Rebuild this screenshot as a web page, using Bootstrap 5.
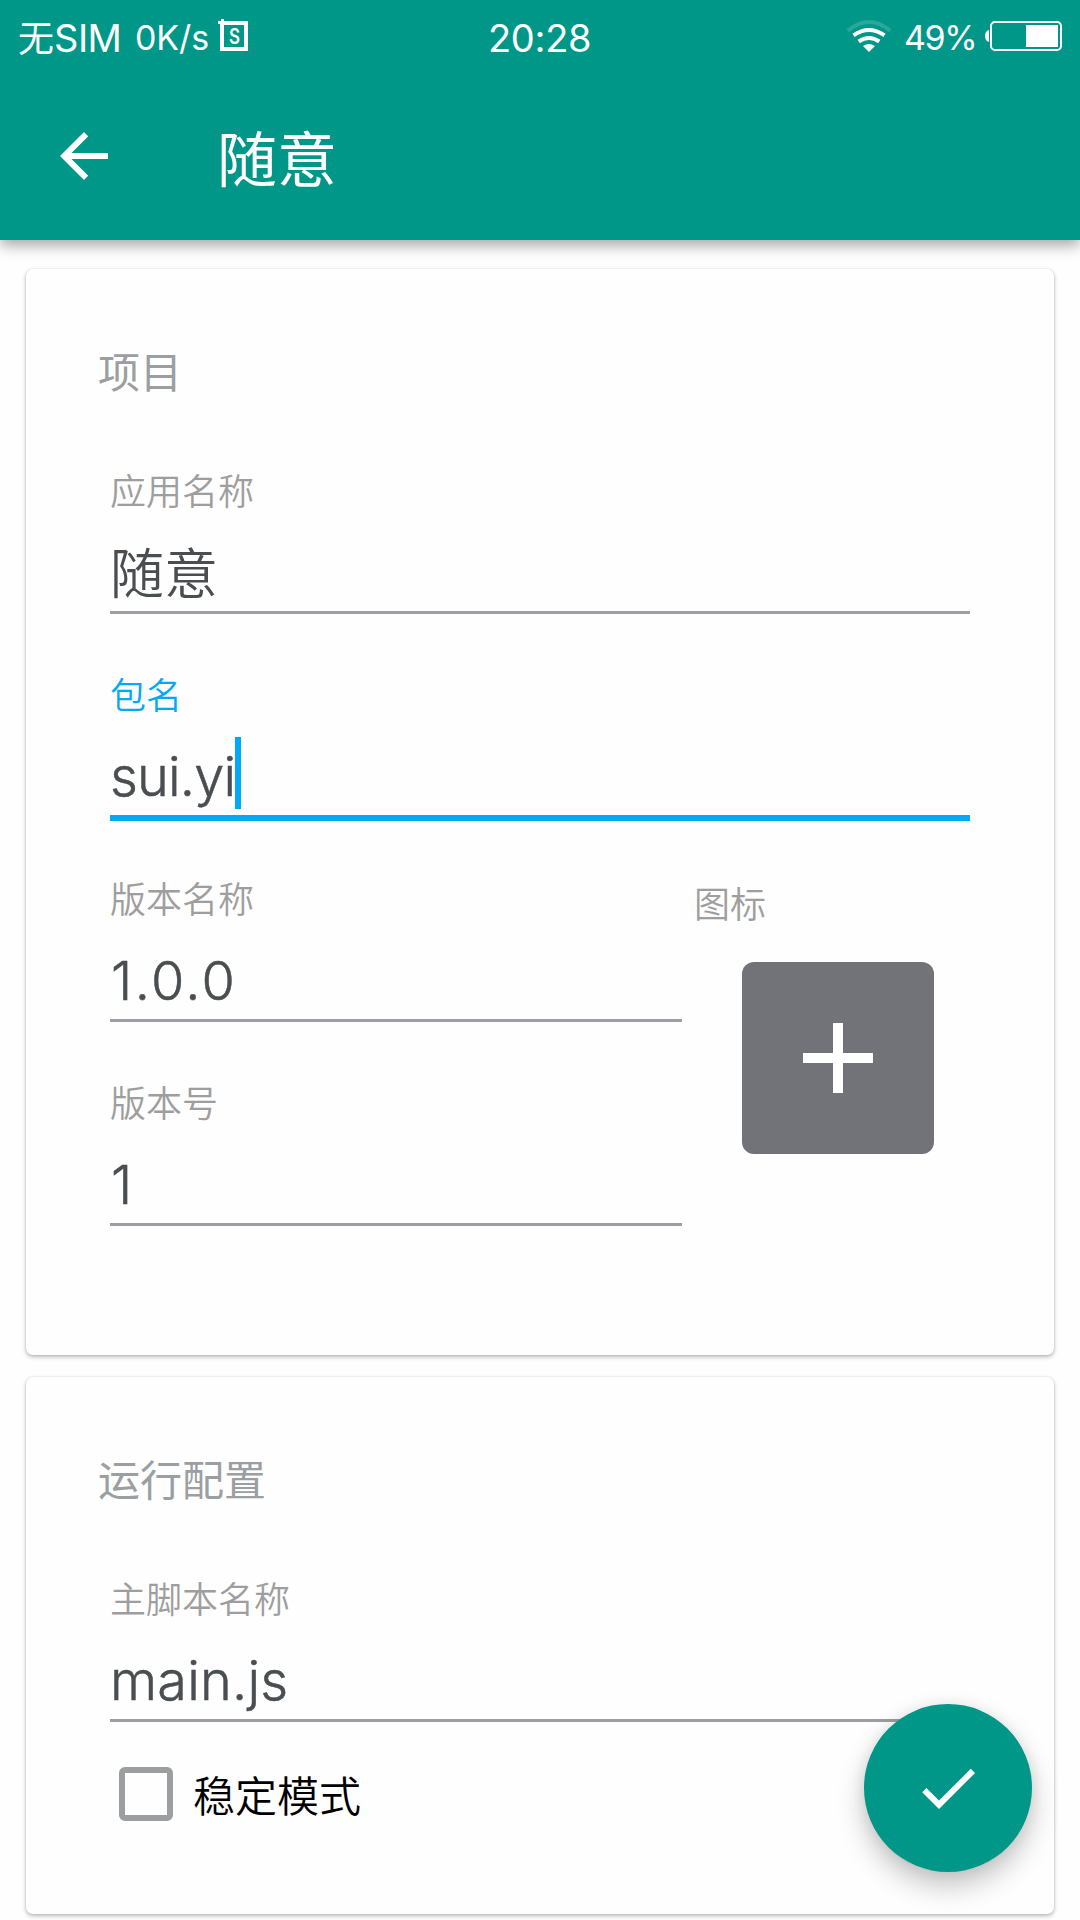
<!DOCTYPE html>
<html lang="zh-CN">
<head>
<meta charset="utf-8">
<meta name="viewport" content="width=device-width, initial-scale=1">
<title>随意</title>
<link href="https://cdn.jsdelivr.net/npm/bootstrap@5.3.0/dist/css/bootstrap.min.css" rel="stylesheet">
<style>
  body { width: 1080px; height: 1920px; overflow: hidden; background: #fefefe; color: #4a4e51;
         font-family: Inter, "Noto Sans CJK SC", sans-serif; font-weight: 350; }
  .top-area { height: 240px; background: #009788; box-shadow: 0 5px 14px rgba(0,0,0,.36); position: relative; }
  .status-row { height: 72px; padding: 0 17px 0 18px; font-weight: 400; line-height: 72px; }
  .status-row svg { display: block; flex: none; }
  .carrier { font-size: 38px; width: 117px; letter-spacing: -.5px; padding-top: 4px; }
  .carrier span { font-size: 36px; letter-spacing: 0; }
  .speed { font-size: 34px; width: 83px; letter-spacing: -.1px; padding-top: 3px; }
  .clock { font-size: 38px; letter-spacing: -.3px; padding-top: 3px; }
  .percent { font-size: 34px; width: 81px; letter-spacing: -1.4px; padding-top: 3px; }
  .status-side { width: 470px; }
  .s-badge { width: 32px; height: 34px; }
  .app-row { height: 168px; padding-left: 48px; }
  .app-title { font-size: 60px; line-height: 84px; font-weight: 400; margin-left: 97px; padding-top: 7px; }
  .page-body { padding: 29px 26px 0; }
  .panel { border: 0; border-radius: 7px; background: #fefefe; padding: 0 84px;
           box-shadow: 0 2px 4px rgba(0,0,0,.27), 0 0 2px rgba(0,0,0,.12); }
  .panel-project { height: 1086px; margin-bottom: 22px; }
  .panel-run { height: 537px; }
  .section-title { height: 144px; padding: 74px 0 0; margin: 0 0 0 -12px; font-size: 42px; line-height: 60px;
                   font-weight: 400; color: #9b9fa2; }
  .field { height: 204px; padding-top: 52px; }
  .field-label { font-size: 36px; line-height: 54px; height: 54px; color: #9e9e9e; }
  .field-value { height: 92px; margin-top: 14px; font-size: 54px; line-height: 80px; display: flex; align-items: flex-start; }
  .field-value.cjk { line-height: 83px; }
  .field-line { height: 3px; background: #9c9ea1; margin-top: -14px; }
  .field.active .field-label { color: #03a9f5; }
  .field.active .field-line { height: 6px; background: #03a9f5; }
  .latin, .digits, .script-name { -webkit-text-stroke: .5px #4a4e51; }
  .latin { letter-spacing: -.8px; }
  .digits { letter-spacing: 2.4px; padding-left: 1px; }
  .script-name { letter-spacing: .2px; }
  .caret { width: 6px; height: 72px; background: #03a9f5; }
  .col-version { width: 572px; }
  .col-icon { padding: 57px 0 0 12px; }
  .icon-pick { width: 192px; height: 192px; border-radius: 12px; background: #727378; margin: 30px 0 0 48px; }
  .check-row { height: 54px; margin-top: 42px; padding-left: 9px; font-size: 42px; color: #000; gap: 20px; }
  .check-text { padding-top: 4px; }
  .check-box { width: 54px; height: 54px; border: 6px solid #9b9fa2; border-radius: 6px; }
  .fab { position: absolute; left: 864px; top: 1704px; width: 168px; height: 168px; background: #009788;
         box-shadow: 0 14px 28px rgba(0,0,0,.23), 0 0 14px rgba(0,0,0,.07); }
</style>
<script src="https://cdn.jsdelivr.net/npm/bootstrap@5.3.0/dist/js/bootstrap.bundle.min.js"></script>
</head>
<body class="position-relative">
<header class="top-area text-white">
  <div class="status-row d-flex align-items-center">
    <div class="status-side d-flex align-items-center text-nowrap">
      <div class="carrier"><span>无</span>SIM</div>
      <div class="speed">0K/s</div>
      <svg class="s-badge" viewBox="0 0 32 34"><path d="M0 2H3V0H6V2H30V32H2V5H0ZM6 6V28H26V6Z" fill="#fff" fill-rule="evenodd"/><text x="11" y="25" font-size="21" font-weight="600" font-family="Inter" fill="#fff" textLength="11" lengthAdjust="spacingAndGlyphs">S</text></svg>
    </div>
    <div class="clock">20:28</div>
    <div class="d-flex align-items-center ms-auto text-nowrap">
      <svg width="46" height="34" viewBox="847 19 46 34" class="me-2">
        <path d="M848.8 30.8Q870 13.200 891.2 30.8" fill="none" stroke="#fff" stroke-opacity=".16" stroke-width="4"/>
        <path d="M854.500 35.300Q870 24.700 885.500 35.300M859.700 41.500Q870 34.500 880.300 41.500" fill="none" stroke="#fff" stroke-width="4"/>
        <path d="M864 46Q870 42 876 46L870 52Z" fill="#fff"/>
      </svg>
      <div class="percent ms-1">49%</div>
      <svg width="78" height="34" viewBox="985 19 78 34">
        <path d="M989 30v12q-4-1-4-6t4-6z" fill="#fff"/>
        <rect x="991" y="22" width="70" height="28" rx="4" fill="none" stroke="#fff" stroke-width="2"/>
        <rect x="1026" y="25" width="32" height="22" fill="#fff"/>
      </svg>
    </div>
  </div>
  <div class="app-row d-flex align-items-center">
    <svg width="72" height="72" viewBox="0 0 24 24" fill="#fff"><path d="M20 11H7.830l5.590-5.590L12 4l-8 8 8 8 1.410-1.410L7.830 13H20v-2z"/></svg>
    <h1 class="app-title mb-0">随意</h1>
  </div>
</header>

<main class="page-body">
  <section class="card panel panel-project">
    <h2 class="section-title">项目</h2>
    <div class="field">
      <div class="field-label">应用名称</div>
      <div class="field-value cjk">随意</div>
      <div class="field-line"></div>
    </div>
    <div class="field active">
      <div class="field-label">包名</div>
      <div class="field-value"><span class="latin">sui.yi</span><i class="caret"></i></div>
      <div class="field-line"></div>
    </div>
    <div class="d-flex">
      <div class="col-version">
        <div class="field">
          <div class="field-label">版本名称</div>
          <div class="field-value digits">1.0.0</div>
          <div class="field-line"></div>
        </div>
        <div class="field">
          <div class="field-label">版本号</div>
          <div class="field-value digits">1</div>
          <div class="field-line"></div>
        </div>
      </div>
      <div class="col-icon">
        <div class="field-label">图标</div>
        <div class="icon-pick d-flex align-items-center justify-content-center">
          <svg width="70" height="70" viewBox="0 0 70 70" fill="#fff"><path d="M30 0h10v30h30v10H40v30H30V40H0V30h30z"/></svg>
        </div>
      </div>
    </div>
  </section>

  <section class="card panel panel-run">
    <h2 class="section-title">运行配置</h2>
    <div class="field">
      <div class="field-label">主脚本名称</div>
      <div class="field-value script-name">main.js</div>
      <div class="field-line"></div>
    </div>
    <div class="check-row d-flex align-items-center" role="checkbox" aria-checked="false">
      <div class="check-box"></div>
      <div class="check-text">稳定模式</div>
    </div>
  </section>
</main>

<div class="fab rounded-circle d-flex align-items-center justify-content-center" role="button">
  <svg width="72" height="72" viewBox="0 0 24 24" fill="#fff"><path d="M9 16.200L4.800 12l-1.400 1.400L9 19 21 7l-1.400-1.400L9 16.200z"/></svg>
</div>
</body>
</html>
